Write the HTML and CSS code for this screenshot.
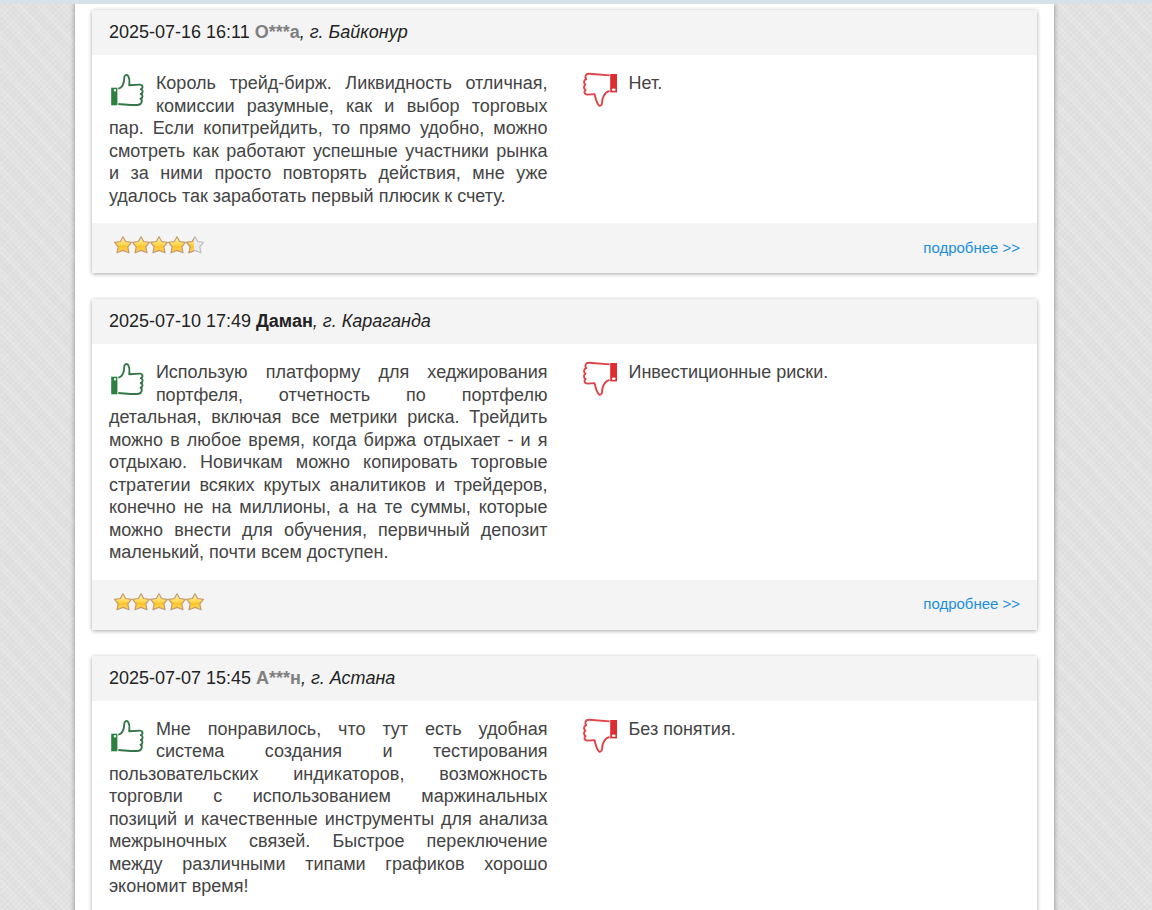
FILE: index.html
```html
<!DOCTYPE html>
<html lang="ru">
<head>
<meta charset="utf-8">
<meta name="viewport" content="width=device-width, initial-scale=1">
<title>Отзывы</title>
<link rel="stylesheet" href="styles.css">
</head>
<body>
<svg class="sprite" aria-hidden="true">
  <defs>
    <linearGradient id="gold" x1="0" y1="0" x2="0" y2="1">
      <stop offset="0" stop-color="#fff0a8"/>
      <stop offset=".45" stop-color="#ffdb5c"/>
      <stop offset=".6" stop-color="#fdc52c"/>
      <stop offset="1" stop-color="#ffd65a"/>
    </linearGradient>
    <clipPath id="left-half"><rect width="8" height="18"/></clipPath>
    <symbol id="star" viewBox="0 0 18 18">
      <path d="M9 .8 11.7 5.5 17.4 6.3 13.8 10.9 15 16.8 9 14.4 3 16.8 4.2 10.9 .6 6.3 6.3 5.5Z" fill="url(#gold)" stroke="#c39a70" stroke-width="1.2" stroke-linejoin="round"/>
    </symbol>
    <symbol id="star-half" viewBox="0 0 18 18">
      <path d="M9 .8 11.7 5.5 17.4 6.3 13.8 10.9 15 16.8 9 14.4 3 16.8 4.2 10.9 .6 6.3 6.3 5.5Z" fill="#ececec" stroke="#bdbdbd" stroke-width="1.2" stroke-linejoin="round"/>
      <path clip-path="url(#left-half)" d="M9 .8 11.7 5.5 17.4 6.3 13.8 10.9 15 16.8 9 14.4 3 16.8 4.2 10.9 .6 6.3 6.3 5.5Z" fill="url(#gold)" stroke="#c39a70" stroke-width="1.2" stroke-linejoin="round"/>
    </symbol>
    <symbol id="thumb-up" viewBox="0 -1 36 36">
      <path d="M2.2 14.7H8.4V32.3H2.2Z" fill="#2c8040"/>
      <rect x="4.8" y="16" width="2.4" height="2.4" rx="1" fill="#e8f2ea"/>
      <path d="M9.3 15.6C13.5 15.2 15.3 9.5 15.2 5.3 15.1 1.7 18.2.9 19.4 3.4 21.3 7 20.3 9.8 20.2 12.2L30.5 11.6C34.1 11.5 34.3 15.2 31.8 16.1 34.2 16.8 34.4 20 31.7 21 34.2 21.8 34 25 31.5 25.7 33.8 27 33 31.2 29.7 31.7 25.5 32.6 15 31.2 9.3 31" fill="none" stroke="#34764a" stroke-width="1.9" stroke-linejoin="round"/>
    </symbol>
    <symbol id="thumb-down" viewBox="-1 0 36 36">
      <path d="M28.2 2H35V20.4H28.2Z" fill="#df2c30"/>
      <ellipse cx="31.7" cy="17.8" rx="1.9" ry="1.3" fill="#fff"/>
      <path d="M27.6 3.4 7.3 1.7C3.4 1.5 2.4 5 4.3 7.2 1.4 8 1.5 11.4 3.5 12.7 1.3 14 1.6 17.1 3.7 18 1.3 19.8 2.4 22.6 5.6 22.6L12.5 22.1C13.6 26 14.5 30.3 16.4 32.8 17.8 34.5 20 33.6 20.1 30.7 20.1 25.8 22.4 20.2 27.6 18.8" fill="none" stroke="#df4247" stroke-width="1.9" stroke-linejoin="round"/>
    </symbol>
  </defs>
</svg>
<main class="page">
  <article class="review">
    <header class="review-head"><time>2025-07-16 16:11</time> <b class="guest">О***а</b><i>, г. Байконур</i></header>
    <div class="review-body">
      <p class="opinion"><svg class="thumb" role="img" aria-label="Плюсы"><use href="#thumb-up"/></svg>Король трейд-бирж. Ликвидность отличная, комиссии разумные, как и выбор торговых пар. Если копитрейдить, то прямо удобно, можно смотреть как работают успешные участники рынка и за ними просто повторять действия, мне уже удалось так заработать первый плюсик к счету.</p>
      <p class="opinion"><svg class="thumb" role="img" aria-label="Минусы"><use href="#thumb-down"/></svg>Нет.</p>
    </div>
    <footer class="review-foot">
      <div class="stars" role="img" aria-label="4,5 из 5"><svg class="star"><use href="#star"/></svg><svg class="star"><use href="#star"/></svg><svg class="star"><use href="#star"/></svg><svg class="star"><use href="#star"/></svg><svg class="star"><use href="#star-half"/></svg></div>
      <a class="more" href="#">подробнее &gt;&gt;</a>
    </footer>
  </article>

  <article class="review">
    <header class="review-head"><time>2025-07-10 17:49</time> <b>Даман</b><i>, г. Караганда</i></header>
    <div class="review-body">
      <p class="opinion"><svg class="thumb" role="img" aria-label="Плюсы"><use href="#thumb-up"/></svg>Использую платформу для хеджирования портфеля, отчетность по портфелю детальная, включая все метрики риска. Трейдить можно в любое время, когда биржа отдыхает - и я отдыхаю. Новичкам можно копировать торговые стратегии всяких крутых аналитиков и трейдеров, конечно не на миллионы, а на те суммы, которые можно внести для обучения, первичный депозит маленький, почти всем доступен.</p>
      <p class="opinion"><svg class="thumb" role="img" aria-label="Минусы"><use href="#thumb-down"/></svg>Инвестиционные риски.</p>
    </div>
    <footer class="review-foot">
      <div class="stars" role="img" aria-label="5 из 5"><svg class="star"><use href="#star"/></svg><svg class="star"><use href="#star"/></svg><svg class="star"><use href="#star"/></svg><svg class="star"><use href="#star"/></svg><svg class="star"><use href="#star"/></svg></div>
      <a class="more" href="#">подробнее &gt;&gt;</a>
    </footer>
  </article>

  <article class="review">
    <header class="review-head"><time>2025-07-07 15:45</time> <b class="guest">А***н</b><i>, г. Астана</i></header>
    <div class="review-body">
      <p class="opinion"><svg class="thumb" role="img" aria-label="Плюсы"><use href="#thumb-up"/></svg>Мне понравилось, что тут есть удобная система создания и тестирования пользовательских индикаторов, возможность торговли с использованием маржинальных позиций&nbsp;и качественные инструменты для анализа межрыночных связей. Быстрое переключение между различными типами графиков хорошо экономит время!</p>
      <p class="opinion"><svg class="thumb" role="img" aria-label="Минусы"><use href="#thumb-down"/></svg>Без понятия.</p>
    </div>
  </article>
</main>
</body>
</html>
```
FILE: styles.css
```css
* {
  box-sizing: border-box;
}

html {
  overflow-x: hidden;
  scrollbar-width: none;
}

body {
  margin: 0;
  border-top: 4px solid #d6e1ea;
  background-color: #dedede;
  background-image:
    repeating-linear-gradient(45deg, rgba(255, 255, 255, .16) 0 1px, transparent 1px 4px),
    repeating-linear-gradient(-45deg, rgba(255, 255, 255, .16) 0 1px, transparent 1px 4px),
    repeating-linear-gradient(50deg, rgba(255, 255, 255, .1) 0 5px, transparent 9px 17px);
  color: #444;
  font: 18px/1.25 "Liberation Sans", Arial, sans-serif;
}

.sprite {
  position: absolute;
  width: 0;
  height: 0;
}

.page {
  margin: 0 8.5% 0 6.5%;
  padding: 6px 17px 0;
  background: #fff;
  box-shadow: 0 0 5px rgba(0, 0, 0, .4);
}

.review {
  margin-bottom: 26px;
  border-radius: 2px;
  background: #fff;
  box-shadow: 0 1px 4px rgba(0, 0, 0, .35);
}

.review:last-child {
  margin-bottom: 0;
}

.review-head {
  min-height: 45px;
  padding: 11px 17px;
  background: #f4f4f4;
  color: #222;
}

.guest {
  color: #808080;
}

.review-body {
  display: grid;
  grid-template-columns: 1fr 1fr;
}

.opinion {
  margin: 0;
  padding: 17px 17px 16px;
  text-align: justify;
}

.thumb {
  float: left;
  width: 36px;
  height: 36px;
  margin-right: 11px;
}

.review-foot {
  display: flex;
  justify-content: space-between;
  align-items: center;
  height: 50px;
  padding: 0 17px 0 22px;
  background: #f4f4f4;
}

.stars {
  display: flex;
  padding-bottom: 6px;
}

.star {
  width: 18px;
  height: 18px;
}

.more {
  color: #1a8fe0;
  font-size: 15px;
  text-decoration: none;
}
```
